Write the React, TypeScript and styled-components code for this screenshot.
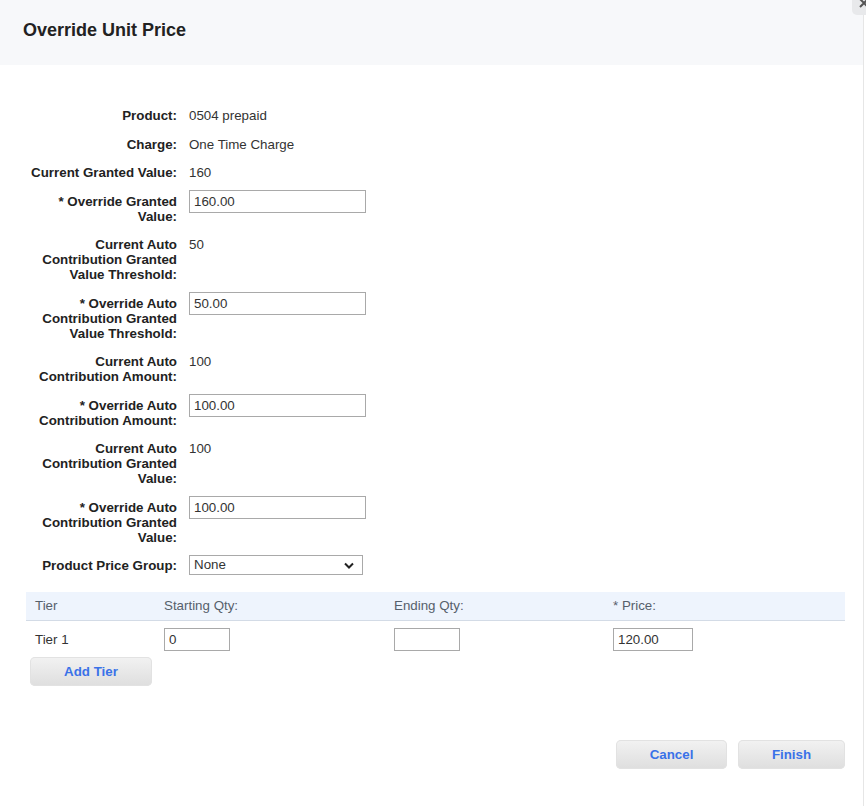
import React from 'react';
import styled, { createGlobalStyle } from 'styled-components';

const GlobalStyle = createGlobalStyle`
	html, body {
		margin: 0;
		padding: 0;
		background: #fff;
		overflow: hidden;
	}
	body {
		font-family: 'Liberation Sans', Arial, sans-serif;
		font-size: 10pt;
		color: #333;
	}
`;

const Dialog = styled.div`
	position: relative;
	width: 864px;
	height: 806px;
	box-sizing: border-box;
	border-right: 1px solid #e6e6e6;
	background: #fff;
`;

const Header = styled.div`
	height: 65px;
	box-sizing: border-box;
	padding: 20px 23px 0;
	background: #f7f8fa;
`;

const Title = styled.h2`
	margin: 0;
	font-size: 18px;
	line-height: 20px;
	font-weight: 700;
	color: #222;
`;

const CloseButton = styled.div`
	position: absolute;
	top: -9px;
	right: -13px;
	width: 24px;
	height: 24px;
	border-radius: 5px;
	background: #e8e9eb;
	display: flex;
	align-items: center;
	justify-content: center;
`;

const Body = styled.div`
	padding: 36px 18px 0 26px;
`;

const Field = styled.div`
	display: grid;
	grid-template-columns: 151px 1fr;
	column-gap: 12px;
	align-items: start;
`;

const Label = styled.div`
	text-align: right;
	font-weight: 700;
	color: #222;
	line-height: 15px;
	padding: 7px 0 6.5px;
`;

const Value = styled.div`
	line-height: 15px;
	padding: 7px 0 6.5px;
	color: #333;
`;

const TextInput = styled.input<{ $w: number }>`
	box-sizing: border-box;
	width: ${(p) => p.$w}px;
	height: 23px;
	margin: 0;
	padding: 0 4px;
	border: 1px solid #a9a9a9;
	border-radius: 0;
	font-family: inherit;
	font-size: 10pt;
	color: #333;
	background: #fff;
	outline: none;
`;

const FieldInput = styled(TextInput)`
	margin-top: 3px;
`;

const SelectBox = styled.div`
	box-sizing: border-box;
	margin-top: 4px;
	width: 174px;
	height: 20px;
	border: 1px solid #a9a9a9;
	padding: 0 8px 0 4px;
	display: flex;
	align-items: center;
	justify-content: space-between;
	color: #333;
	line-height: 18px;
`;

const Table = styled.div`
	margin-top: 12px;
	width: 819px;
`;

const TableHead = styled.div`
	display: grid;
	grid-template-columns: 129px 230px 219px 1fr;
	align-items: center;
	height: 28px;
	background: #eef4fd;
	border-bottom: 1px solid #d3dbe6;
	color: #56606b;
`;

const TableRow = styled.div`
	display: grid;
	grid-template-columns: 129px 230px 219px 1fr;
	align-items: center;
	padding: 7px 0 5px;
	color: #333;
`;

const Cell = styled.div`
	padding-left: 9px;
`;

const GrayButton = styled.button<{ $w: number }>`
	width: ${(p) => p.$w}px;
	height: 29px;
	border: none;
	border-radius: 5px;
	background: linear-gradient(#f2f2f2, #dedede);
	box-shadow: inset 0 0 0 1px #e2e2e2;
	color: #3a72e8;
	font-family: inherit;
	font-size: 10pt;
	font-weight: 700;
	padding: 0;
	cursor: pointer;
`;

const AddTierButton = styled(GrayButton)`
	margin: 1px 0 0 4px;
`;

const Footer = styled.div`
	display: flex;
	justify-content: flex-end;
	gap: 11px;
	margin-top: 54px;
	width: 819px;
`;

const Chevron = () => (
	<svg width="10" height="7" viewBox="0 0 10 7">
		<polyline points="1,1.5 5,5.5 9,1.5" fill="none" stroke="#222" strokeWidth="2" />
	</svg>
);

const CloseIcon = () => (
	<svg width="10" height="10" viewBox="0 0 10 10">
		<path d="M1 1 L9 9 M9 1 L1 9" stroke="#555" strokeWidth="2" />
	</svg>
);

const fields: { label: string; value?: string; input?: string }[] = [
	{ label: 'Product:', value: '0504 prepaid' },
	{ label: 'Charge:', value: 'One Time Charge' },
	{ label: 'Current Granted Value:', value: '160' },
	{ label: '* Override Granted Value:', input: '160.00' },
	{ label: 'Current Auto Contribution Granted Value Threshold:', value: '50' },
	{ label: '* Override Auto Contribution Granted Value Threshold:', input: '50.00' },
	{ label: 'Current Auto Contribution Amount:', value: '100' },
	{ label: '* Override Auto Contribution Amount:', input: '100.00' },
	{ label: 'Current Auto Contribution Granted Value:', value: '100' },
	{ label: '* Override Auto Contribution Granted Value:', input: '100.00' },
];

const App = () => {
	return (
		<Dialog>
			<GlobalStyle />
			<Header>
				<Title>Override Unit Price</Title>
			</Header>
			<CloseButton>
				<CloseIcon />
			</CloseButton>

			<Body>
				{fields.map((f, i) => (
					<Field key={i}>
						<Label>{f.label}</Label>
						{f.input !== undefined ? (
							<div>
								<FieldInput $w={177} defaultValue={f.input} />
							</div>
						) : (
							<Value>{f.value}</Value>
						)}
					</Field>
				))}

				<Field>
					<Label>Product Price Group:</Label>
					<SelectBox>
						<span>None</span>
						<Chevron />
					</SelectBox>
				</Field>

				<Table>
					<TableHead>
						<Cell>Tier</Cell>
						<Cell>Starting Qty:</Cell>
						<Cell>Ending Qty:</Cell>
						<Cell>* Price:</Cell>
					</TableHead>
					<TableRow>
						<Cell>Tier 1</Cell>
						<Cell>
							<TextInput $w={66} defaultValue="0" />
						</Cell>
						<Cell>
							<TextInput $w={66} defaultValue="" />
						</Cell>
						<Cell>
							<TextInput $w={80} defaultValue="120.00" />
						</Cell>
					</TableRow>
				</Table>
				<AddTierButton $w={122}>Add Tier</AddTierButton>

				<Footer>
					<GrayButton $w={111}>Cancel</GrayButton>
					<GrayButton $w={107}>Finish</GrayButton>
				</Footer>
			</Body>
		</Dialog>
	);
};

export default App;
